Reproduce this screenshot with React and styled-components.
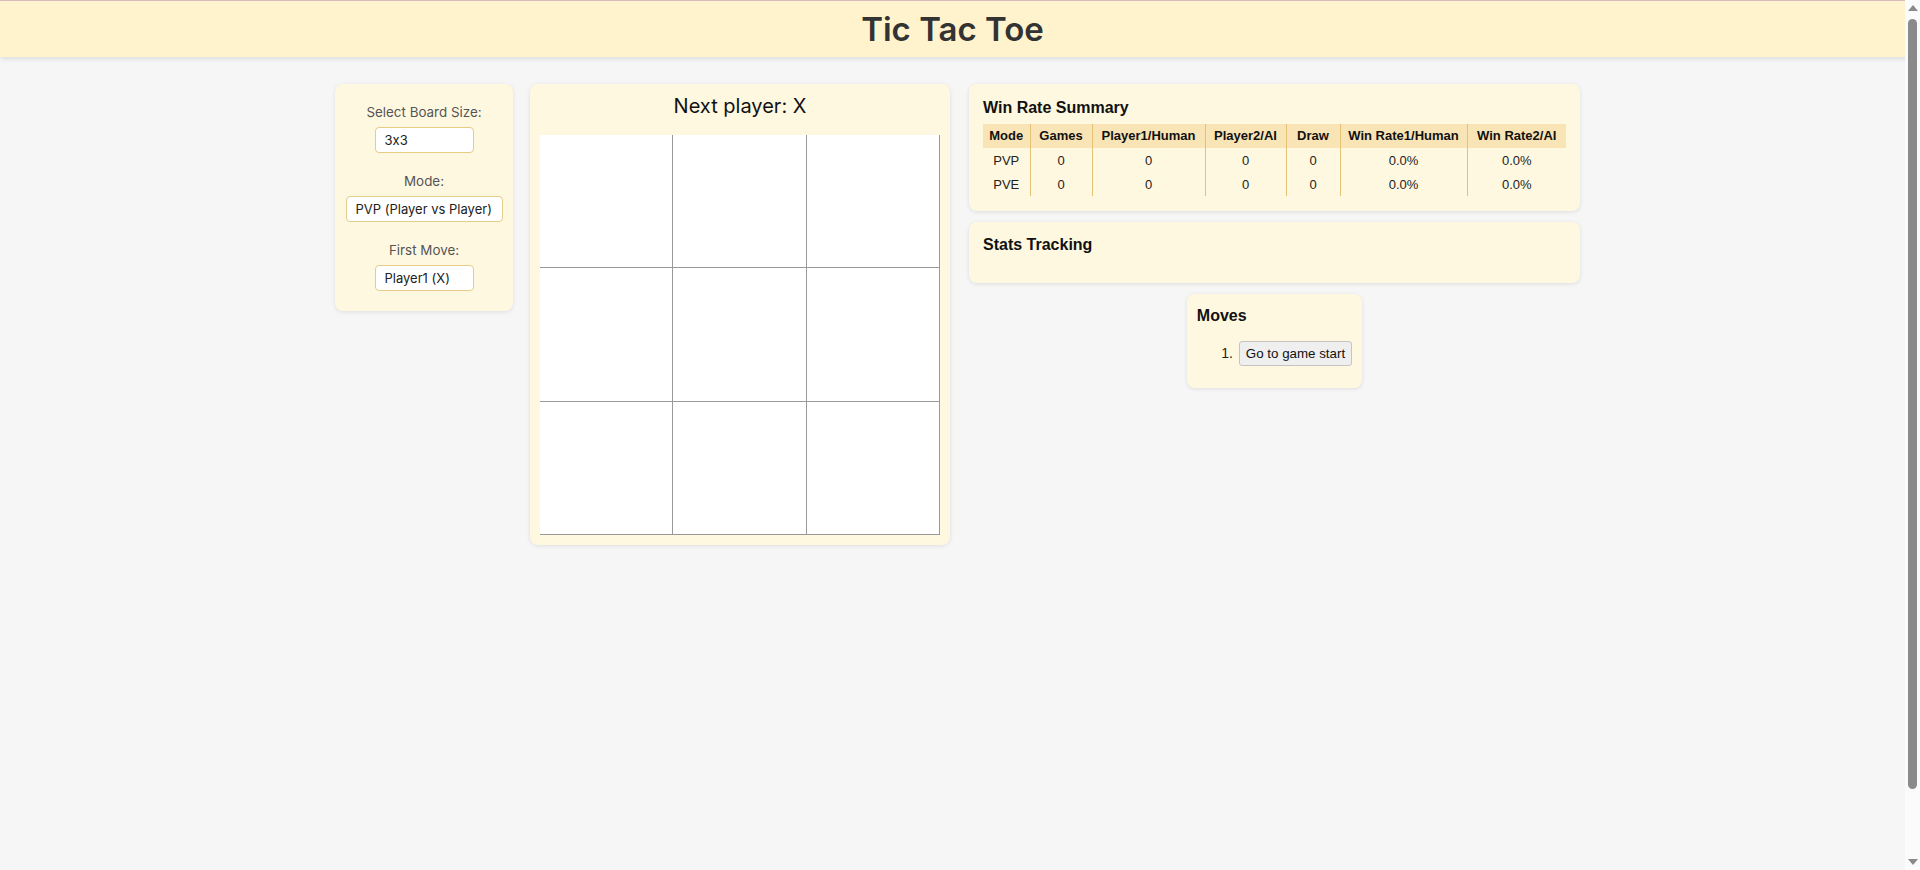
import React from 'react';
import styled, { createGlobalStyle } from 'styled-components';

const GlobalStyle = createGlobalStyle`
  html, body {
    margin: 0;
    padding: 0;
  }
  body {
    background: #f6f6f6;
    font-family: Inter, "Noto Sans", sans-serif;
    font-feature-settings: "calt" 0;
    color: #222;
  }
  * {
    box-sizing: border-box;
  }
`;

const Header = styled.header`
  height: 57px;
  padding-right: 15px;
  background: #fff3cd;
  border-top: 1px solid #d9b9bd;
  box-shadow: 0 2px 5px rgba(0, 0, 0, 0.1);
  display: flex;
  align-items: center;
  justify-content: center;
  position: relative;
  z-index: 1;
`;

const Title = styled.h1`
  margin: 0;
  font-size: 33px;
  font-weight: 600;
  color: #333;
  line-height: 1;
`;

const Main = styled.main`
  min-height: 100vh;
  padding: 27px 5px 0 0;
  box-sizing: content-box;
`;

const GameRow = styled.div`
  display: flex;
  justify-content: center;
  align-items: flex-start;
`;

const Card = styled.div`
  background: #fff8e1;
  border-radius: 8px;
  box-shadow: 0 1px 4px rgba(0, 0, 0, 0.1);
`;

const SettingsCard = styled(Card)`
  width: 178px;
  padding: 20px 10px;
  text-align: center;
  margin-right: 17px;
`;

const Field = styled.div`
  & + & {
    margin-top: 20px;
  }
`;

const Label = styled.label`
  display: block;
  font-size: 13.4px;
  line-height: 17px;
  color: #555;
  margin-bottom: 6px;
`;

const Select = styled.select`
  appearance: none;
  -webkit-appearance: none;
  width: ${p => p.$w}px;
  height: 26px;
  padding: 0 9px;
  border: 1px solid #e6cd85;
  border-radius: 4px;
  background: #fff;
  font-family: Inter, "Noto Sans", sans-serif;
  font-feature-settings: "calt" 0;
  font-size: 13px;
  color: #222;
  text-align: left;
`;

const BoardCard = styled(Card)`
  width: 420px;
  padding: 10px;
  margin-right: 19px;
`;

const Status = styled.div`
  font-size: 20px;
  line-height: 24px;
  text-align: center;
  color: #111;
  margin-bottom: 17px;
`;

const Board = styled.div`
  display: grid;
  grid-template-columns: repeat(3, 1fr);
  grid-auto-rows: 133.33px;
  width: 400px;
  background: #fff;
`;

const Square = styled.button`
  background: #fff;
  border: none;
  border-right: 1px solid #999;
  border-bottom: 1px solid #999;
  padding: 0;
  margin: 0;
`;

const InfoColumn = styled.div`
  width: 611px;
  display: flex;
  flex-direction: column;
  gap: 11px;
  font-family: "Liberation Sans", Arial, sans-serif;
`;

const InfoCard = styled(Card)`
  padding: ${p => p.$pad || '15px 14px'};
`;

const CardTitle = styled.h3`
  margin: 0 0 ${p => p.$mb || 0}px;
  font-size: 16px;
  line-height: 18px;
  font-weight: 700;
  color: #111;
`;

const Table = styled.table`
  width: 100%;
  border-collapse: collapse;
  table-layout: fixed;
  font-size: 13px;
`;

const Col = styled.col`
  width: ${p => p.$w}px;
`;

const Th = styled.th`
  background: #f9e4b5;
  font-weight: 700;
  padding: 4px 2px;
  line-height: 16px;
  color: #111;
  & + & {
    border-left: 1px solid #e3c273;
  }
`;

const Td = styled.td`
  text-align: center;
  padding: 5px 2px 3px;
  line-height: 16px;
  color: #222;
  & + & {
    border-left: 1px solid #e3c273;
  }
`;

const MovesCard = styled(Card)`
  align-self: center;
  padding: 13px 10px 6px;
`;

const MoveList = styled.ol`
  margin: 16px 0;
  padding-left: 40px;
  font-size: 14px;
`;

const MoveItem = styled.li`
  padding-left: 2px;
`;

const MoveButton = styled.button`
  font-family: "Liberation Sans", Arial, sans-serif;
  font-size: 13.33px;
  padding: 4px 6px;
  background: #efefef;
  border: 1px solid #c4c4c4;
  border-radius: 3px;
  color: #111;
`;

/* page scrollbar as it appears in the screenshot */
const ScrollTrack = styled.div`
  position: fixed;
  top: 0;
  right: 0;
  width: 15px;
  height: 100vh;
  background: #fbfbfb;
  display: flex;
  flex-direction: column;
  align-items: center;
  z-index: 5;
`;

const Arrow = styled.div`
  width: 0;
  height: 0;
  margin: 5px 0;
  border-left: 5px solid transparent;
  border-right: 5px solid transparent;
  ${p => (p.$down ? 'border-top: 6px solid #8a8a8a;' : 'border-bottom: 6px solid #8a8a8a;')}
`;

const Thumb = styled.div`
  width: 9px;
  height: 770px;
  margin-top: 3px;
  border-radius: 5px;
  background: #8a8a8a;
`;

const Spacer = styled.div`
  flex: 1;
`;

const columns = [
  ['Mode', 47],
  ['Games', 62],
  ['Player1/Human', 113],
  ['Player2/AI', 81],
  ['Draw', 54],
  ['Win Rate1/Human', 127],
  ['Win Rate2/AI', 99],
];

const rows = [
  ['PVP', '0', '0', '0', '0', '0.0%', '0.0%'],
  ['PVE', '0', '0', '0', '0', '0.0%', '0.0%'],
];

export default function App() {
  return (
    <>
      <GlobalStyle />
      <Header>
        <Title>Tic Tac Toe</Title>
      </Header>
      <Main>
        <GameRow>
          <SettingsCard>
            <Field>
              <Label>Select Board Size:</Label>
              <Select $w={99} defaultValue="3">
                <option value="3">3x3</option>
                <option value="4">4x4</option>
                <option value="5">5x5</option>
              </Select>
            </Field>
            <Field>
              <Label>Mode:</Label>
              <Select $w={157} defaultValue="pvp">
                <option value="pvp">PVP (Player vs Player)</option>
                <option value="pve">PVE (Player vs AI)</option>
              </Select>
            </Field>
            <Field>
              <Label>First Move:</Label>
              <Select $w={99} defaultValue="x">
                <option value="x">Player1 (X)</option>
                <option value="o">Player2 (O)</option>
              </Select>
            </Field>
          </SettingsCard>

          <BoardCard>
            <Status>Next player: X</Status>
            <Board>
              {Array.from({ length: 9 }).map((_, i) => (
                <Square key={i} />
              ))}
            </Board>
          </BoardCard>

          <InfoColumn>
            <InfoCard>
              <CardTitle $mb={7}>Win Rate Summary</CardTitle>
              <Table>
                <colgroup>
                  {columns.map(([name, w]) => (
                    <Col key={name} $w={w} />
                  ))}
                </colgroup>
                <thead>
                  <tr>
                    {columns.map(([name]) => (
                      <Th key={name}>{name}</Th>
                    ))}
                  </tr>
                </thead>
                <tbody>
                  {rows.map(r => (
                    <tr key={r[0]}>
                      {r.map((c, i) => (
                        <Td key={i}>{c}</Td>
                      ))}
                    </tr>
                  ))}
                </tbody>
              </Table>
            </InfoCard>

            <InfoCard $pad="14px 14px 15px">
              <CardTitle $mb={14}>Stats Tracking</CardTitle>
            </InfoCard>

            <MovesCard>
              <CardTitle>Moves</CardTitle>
              <MoveList>
                <MoveItem>
                  <MoveButton>Go to game start</MoveButton>
                </MoveItem>
              </MoveList>
            </MovesCard>
          </InfoColumn>
        </GameRow>
      </Main>
      <ScrollTrack>
        <Arrow />
        <Thumb />
        <Spacer />
        <Arrow $down />
      </ScrollTrack>
    </>
  );
}
